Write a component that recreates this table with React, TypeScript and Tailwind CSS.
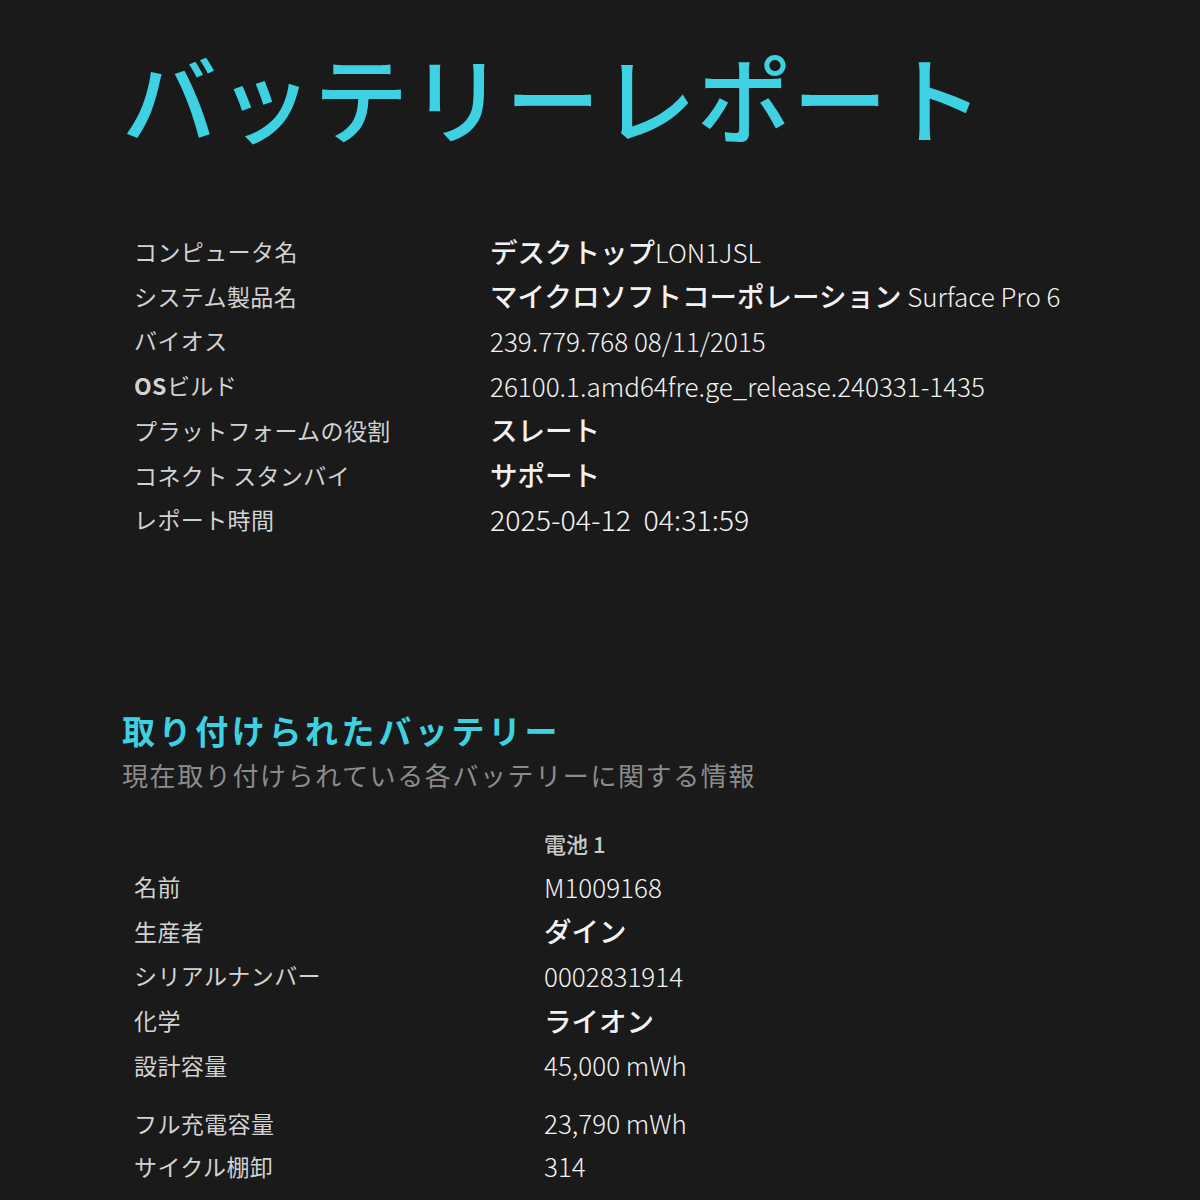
const jp = { fontFamily: '"Noto Sans CJK JP", "Noto Sans", sans-serif' };

type Row = { label: React.ReactNode; value: React.ReactNode };

const Kana = ({ children }: { children: React.ReactNode }) => (
  <span className="font-medium text-[27.5px]">{children}</span>
);

const systemRows: Row[] = [
  { label: 'コンピュータ名', value: <><Kana>デスクトップ</Kana>LON1JSL</> },
  { label: 'システム製品名', value: <><Kana>マイクロソフトコーポレーション</Kana> Surface Pro 6</> },
  { label: 'バイオス', value: '239.779.768 08/11/2015' },
  { label: <><span className="font-bold">OS</span>ビルド</>, value: '26100.1.amd64fre.ge_release.240331-1435' },
  { label: 'プラットフォームの役割', value: <Kana>スレート</Kana> },
  { label: 'コネクト スタンバイ', value: <Kana>サポート</Kana> },
  { label: 'レポート時間', value: <span className="text-[28.5px]">2025-04-12{'\u00a0 '}04:31:59</span> },
];

const batteryRows: Row[] = [
  { label: '名前', value: 'M1009168' },
  { label: '生産者', value: <Kana>ダイン</Kana> },
  { label: 'シリアルナンバー', value: '0002831914' },
  { label: '化学', value: <Kana>ライオン</Kana> },
  { label: '設計容量', value: '45,000 mWh' },
];

const batteryRows2: Row[] = [
  { label: 'フル充電容量', value: '23,790 mWh' },
  { label: 'サイクル棚卸', value: '314' },
];

function InfoRow({ row, valueX, h }: { row: Row; valueX: string; h: string }) {
  return (
    <div className={`flex items-center ${h}`}>
      <div className={`${valueX} shrink-0 text-[23px] tracking-[0.4px] text-[#d2d2d2]`}>{row.label}</div>
      <div className="text-[26px] font-light text-[#f2f2f2] whitespace-nowrap">{row.value}</div>
    </div>
  );
}

export default function App() {
  return (
    <div className="w-[1200px] h-[1200px] overflow-hidden bg-[#1a1a1a]" style={jp}>
      <h1 className="pl-[122px] pt-[36px] text-[95px] leading-[120px] font-medium text-[#3ed1e2] tracking-[0.8px]">
        バッテリーレポート
      </h1>

      <div className="pl-[134px] mt-[73px]">
        {systemRows.map((r, i) => (
          <InfoRow key={i} row={r} valueX="w-[356px]" h="h-[44.7px]" />
        ))}
      </div>

      <div className="pl-[122px] mt-[166px]">
        <h2 className="text-[33px] leading-[44px] font-bold text-[#3ed1e2] tracking-[3.6px]">
          取り付けられたバッテリー
        </h2>
        <p className="mt-[4px] text-[26px] leading-[38px] text-[#8c8c8c] tracking-[1.6px]">
          現在取り付けられている各バッテリーに関する情報
        </p>
      </div>

      <div className="pl-[134px] mt-[30px]">
        <div className="flex items-center h-[40px]">
          <div className="w-[410px] shrink-0" />
          <div className="text-[22px] font-medium text-[#c9c9c9]">電池 1</div>
        </div>
        {batteryRows.map((r, i) => (
          <InfoRow key={i} row={r} valueX="w-[410px]" h="h-[44.7px]" />
        ))}
        <div className="h-[14px]" />
        {batteryRows2.map((r, i) => (
          <InfoRow key={i} row={r} valueX="w-[410px]" h="h-[43px]" />
        ))}
      </div>
    </div>
  );
}
